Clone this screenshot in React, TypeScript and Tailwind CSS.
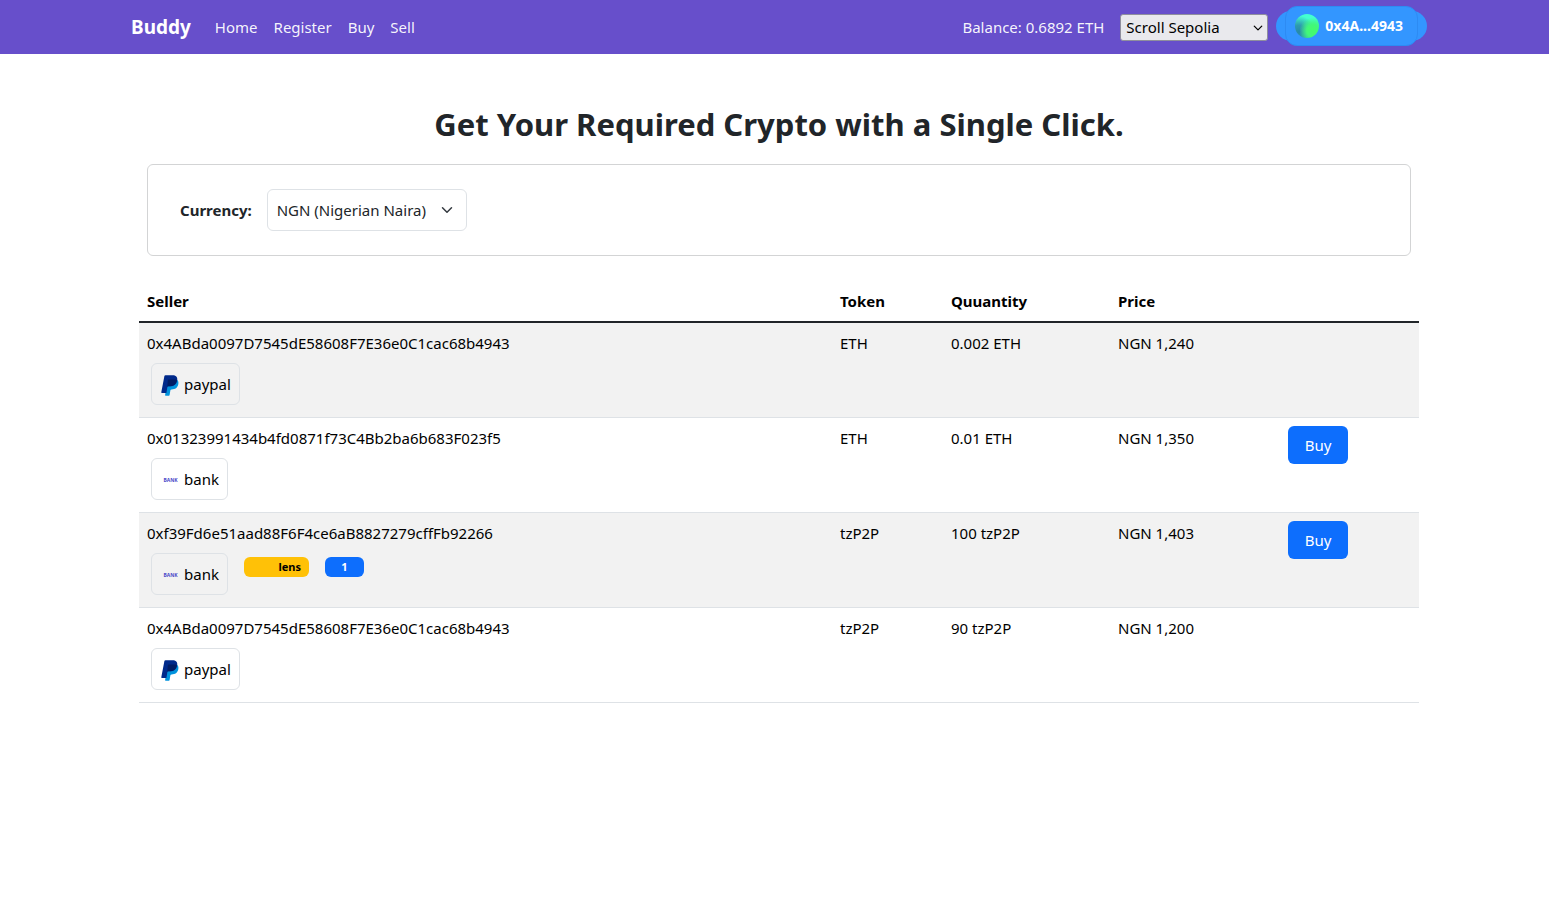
import React from "react";

type Offer = {
  seller: string;
  method: "paypal" | "bank";
  token: string;
  quantity: string;
  price: string;
  lens?: number;
  canBuy: boolean;
};

const offers: Offer[] = [
  { seller: "0x4ABda0097D7545dE58608F7E36e0C1cac68b4943", method: "paypal", token: "ETH", quantity: "0.002 ETH", price: "NGN 1,240", canBuy: false },
  { seller: "0x01323991434b4fd0871f73C4Bb2ba6b683F023f5", method: "bank", token: "ETH", quantity: "0.01 ETH", price: "NGN 1,350", canBuy: true },
  { seller: "0xf39Fd6e51aad88F6F4ce6aB8827279cffFb92266", method: "bank", token: "tzP2P", quantity: "100 tzP2P", price: "NGN 1,403", lens: 1, canBuy: true },
  { seller: "0x4ABda0097D7545dE58608F7E36e0C1cac68b4943", method: "paypal", token: "tzP2P", quantity: "90 tzP2P", price: "NGN 1,200", canBuy: false },
];

const navLinks = ["Home", "Register", "Buy", "Sell"];

function Chevron({ className, width }: { className: string; width: number }) {
  return (
    <svg viewBox="0 0 16 16" className={className} fill="none" stroke="currentColor" strokeWidth={width} strokeLinecap="round" strokeLinejoin="round" aria-hidden="true">
      <path d="m2 5 6 6 6-6" />
    </svg>
  );
}

function PaypalIcon() {
  return (
    <svg viewBox="0 0 18 21" className="h-[21px] w-[18px]" aria-hidden="true">
      <path fill="#0093dd" d="M6.2 8 15.8 4.6c1.5 1.1 1.9 2.7 1.5 4.7-.8 3.7-3.2 5.1-6.6 5.1H10.300c-.4 0-.8.3-.9.8l-.8 4.900c-.1.3-.3.6-.7.600H4.600c-.4 0-.6-.3-.5-.7z" />
      <path fill="#00298a" d="M3.400 1.100C3.500.500 3.900.200 4.500.200h7c3.300 0 5.300 1.500 4.700 5.200-.6 3.900-3.200 5.800-7 5.800H7.300c-.5 0-.8.3-.9.8l-1 6.100H.900c-.5 0-.7-.3-.6-.8z" />
      <path fill="#001c64" d="M6.800 5.400c.1-.5.4-.8.9-.8h5c1.200 0 2.300.1 3.100.500v.5c-.7 3.800-3.100 5.600-6.700 5.600H7.300c-.5 0-.8.2-1 .6z" />
    </svg>
  );
}

function MethodChip({ method }: { method: Offer["method"] }) {
  return (
    <div className="flex h-[42px] items-center gap-1 rounded-md border border-[#dee2e6] pr-2 pl-[9px]">
      {method === "paypal" ? (
        <span className="flex w-[19px] pt-[2px]"><PaypalIcon /></span>
      ) : (
        <span className="w-[19px] pt-[2px] text-center text-[5px] leading-none font-bold text-[#4a48c8]">BANK</span>
      )}
      <span>{method}</span>
    </div>
  );
}

function WalletButton() {
  return (
    <div className="mb-[2px] flex h-[30px] items-center rounded-[15px] bg-[#3396ff] px-[9px]">
      <button type="button" className="flex h-10 items-center gap-[6px] rounded-xl border border-[#2d8bf3] bg-[#3396ff] pr-[14px] pl-[9px] text-sm font-bold text-white">
        <span className="size-6 rounded-full bg-[radial-gradient(circle_at_75%_70%,#44fb6a_0%,#42f77a_25%,transparent_55%),radial-gradient(circle_at_15%_75%,#2688a8_0%,#2e9bb0_25%,transparent_60%),linear-gradient(180deg,#43ffd0_20%,#36e08c_100%)]" />
        0x4A...4943
      </button>
    </div>
  );
}

export default function App() {
  return (
    <div className="min-h-screen bg-white font-['Noto_Sans','Open_Sans',sans-serif] text-[15px] leading-6 text-black">
      <header className="bg-[#674fcb] pl-[9px] text-white">
        <div className="mx-auto flex h-[54px] max-w-[1320px] items-center px-3">
          <a href="#" className="mr-6 text-[19px] font-bold">Buddy</a>
          <nav className="flex gap-4">
            {navLinks.map((l) => (
              <a key={l} href="#" className="text-white/95">{l}</a>
            ))}
          </nav>
          <div className="ml-auto flex items-center">
            <span className="mr-4 text-white/95">Balance: 0.6892 ETH</span>
            <div className="relative mr-2 w-[148px]">
              <select aria-label="Network" className="block h-[27px] w-full appearance-none rounded-[3px] border border-[#8f8f9d] bg-[#e9e9ed] px-[5px] text-black">
                <option>Scroll Sepolia</option>
              </select>
              <Chevron className="pointer-events-none absolute top-[9px] right-[5px] size-[10px] text-black" width={2} />
            </div>
            <WalletButton />
          </div>
        </div>
      </header>

      <main className="pl-[9px]">
        <div className="mx-auto max-w-[1320px] px-5 pt-[50px]">
          <h1 className="text-center text-[31px] leading-10 font-bold text-[#212529]">Get Your Required Crypto with a Single Click.</h1>

          <section className="mx-2 mt-5 flex h-[92px] items-center rounded-md border border-[#d3d4d5] px-8 text-[#212529]">
            <label htmlFor="currency" className="mr-[15px] font-bold">Currency:</label>
            <div className="relative w-[200px]">
              <select id="currency" className="block h-[42px] w-full appearance-none rounded-md border border-[#dee2e6] bg-white px-[9px]">
                <option>NGN (Nigerian Naira)</option>
              </select>
              <Chevron className="pointer-events-none absolute top-[15px] right-[14px] size-3 text-[#343a40]" width={2} />
            </div>
          </section>

          <table className="mt-[25px] w-full table-fixed border-collapse text-left">
            <colgroup>
              <col />
              <col className="w-[111px]" />
              <col className="w-[167px]" />
              <col className="w-[170px]" />
              <col className="w-[139px]" />
            </colgroup>
            <thead>
              <tr className="border-b-2 border-[#212529]">
                <th className="p-2">Seller</th>
                <th className="p-2">Token</th>
                <th className="p-2">Quuantity</th>
                <th className="p-2">Price</th>
                <th className="p-2" aria-label="Action" />
              </tr>
            </thead>
            <tbody>
              {offers.map((o, i) => (
                <tr key={i} className="border-b border-[#dee2e6] align-top odd:bg-[#f2f2f2]">
                  <td className="p-2">
                    <div>{o.seller}</div>
                    <div className="mx-1 mt-2 mb-1 flex items-start gap-4">
                      <MethodChip method={o.method} />
                      {o.lens !== undefined && (
                        <>
                          <span className="mt-1 h-5 w-[65px] rounded-md bg-[#ffc107] pr-2 text-right text-[11px] leading-5 font-bold">lens</span>
                          <span className="mt-1 h-5 w-[39px] rounded-md bg-[#0d6efd] text-center text-[11px] leading-5 font-bold text-white">{o.lens}</span>
                        </>
                      )}
                    </div>
                  </td>
                  <td className="p-2">{o.token}</td>
                  <td className="p-2">{o.quantity}</td>
                  <td className="p-2">{o.price}</td>
                  <td className="p-2">
                    {o.canBuy && (
                      <button type="button" className="h-[38px] w-[60px] rounded-md bg-[#0d6efd] text-white">Buy</button>
                    )}
                  </td>
                </tr>
              ))}
            </tbody>
          </table>
        </div>
      </main>
    </div>
  );
}
